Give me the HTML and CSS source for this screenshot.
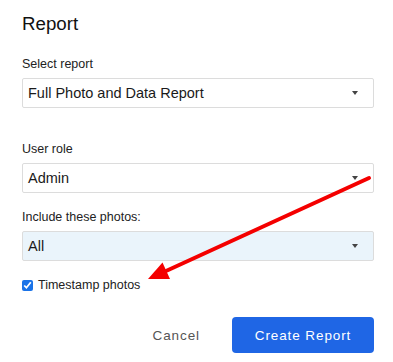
FILE: index.html
```html
<!DOCTYPE html>
<html lang="en">
<head>
    <meta charset="UTF-8">
    <meta name="viewport" content="width=device-width, initial-scale=1.0">
    <title>Report</title>
    <link rel="stylesheet" href="styles.css">
</head>
<body>
    <div class="dialog">
        <h1>Report</h1>

        <div class="field field-first">
            <label>Select report</label>
            <div class="select">
                <span class="value">Full Photo and Data Report</span>
                <span class="caret"></span>
            </div>
        </div>

        <div class="field">
            <label>User role</label>
            <div class="select">
                <span class="value">Admin</span>
                <span class="caret"></span>
            </div>
        </div>

        <div class="field">
            <label>Include these photos:</label>
            <div class="select select-active">
                <span class="value">All</span>
                <span class="caret"></span>
            </div>
        </div>

        <label class="check">
            <input type="checkbox" checked>
            <span>Timestamp photos</span>
        </label>

        <div class="actions">
            <button class="btn-cancel">Cancel</button>
            <button class="btn-primary">Create Report</button>
        </div>
    </div>

    <!-- annotation arrow -->
    <svg class="annotation" width="393" height="362" viewBox="0 0 393 362">
        <line x1="369" y1="178" x2="166" y2="271" stroke="#f40000" stroke-width="4" stroke-linecap="round"/>
        <polygon points="148,279 162.5,262.5 170,279" fill="#f40000"/>
    </svg>
</body>
</html>
```
FILE: styles.css
```css
* {
    margin: 0;
    padding: 0;
    box-sizing: border-box;
}

body {
    font-family: "Liberation Sans", Arial, sans-serif;
    color: #222;
    background: #fff;
    width: 393px;
    height: 362px;
    overflow: hidden;
    position: relative;
}

.dialog {
    padding: 12px 19px 0 22px;
}

h1 {
    font-size: 18.7px;
    font-weight: normal;
    line-height: 24px;
    color: #111;
    margin-bottom: 20px;
}

.field {
    margin-bottom: 16px;
}

.field-first {
    margin-bottom: 33px;
}

.field label {
    display: block;
    font-size: 12.5px;
    line-height: 16px;
    margin-bottom: 6px;
}

.select {
    display: flex;
    align-items: center;
    justify-content: space-between;
    height: 30px;
    padding: 0 15px 0 5px;
    border: 1px solid #dcdcdc;
    border-radius: 2px;
    background: #fff;
    font-size: 14.5px;
    color: #1a1a1a;
}

.select-active {
    background: #eaf4fb;
}

.caret {
    width: 0;
    height: 0;
    border-left: 3px solid transparent;
    border-right: 3px solid transparent;
    border-top: 4px solid #444;
}

.check {
    display: flex;
    align-items: center;
    gap: 5px;
    font-size: 12.5px;
    line-height: 16px;
    margin-top: 1px;
}

.check input {
    width: 11px;
    height: 11px;
    margin: 0;
    accent-color: #1a73e8;
}

.actions {
    display: flex;
    justify-content: flex-end;
    align-items: center;
    gap: 16px;
    margin-top: 24px;
}

button {
    font-family: inherit;
    font-size: 13.5px;
    letter-spacing: 0.9px;
    border: none;
    cursor: pointer;
}

.btn-cancel {
    background: none;
    color: #555;
    padding: 0 16px;
    height: 36px;
}

.btn-primary {
    background: #1f66e5;
    color: #fff;
    width: 142px;
    height: 36px;
    border-radius: 4px;
}

.annotation {
    position: absolute;
    left: 0;
    top: 0;
    pointer-events: none;
}
```
